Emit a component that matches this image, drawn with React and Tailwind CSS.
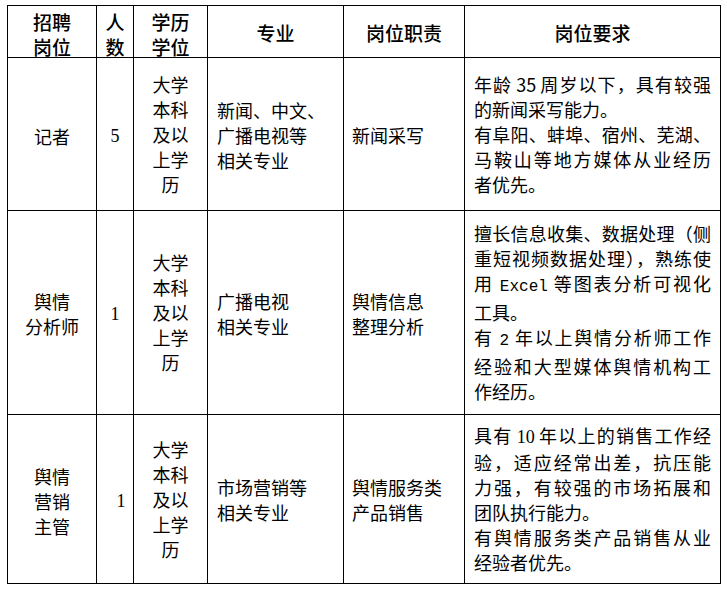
import React from "react";

const CJK = "font-['Noto_Sans_CJK_SC','Noto_Sans',sans-serif]";

function Cell({ children, className = "" }) {
  return (
    <div className={`border-r border-b border-black flex flex-col justify-center ${className}`}>
      {children}
    </div>
  );
}

function J({ children, className = "" }) {
  return (
    <div className={`whitespace-nowrap text-justify [text-align-last:justify] ${className}`}>{children}</div>
  );
}

function L({ children, className = "" }) {
  return <div className={`whitespace-nowrap text-left ${className}`}>{children}</div>;
}

const Serif = ({ children }) => (
  <span className="font-['Liberation_Serif',serif]">{children}</span>
);
const Mono = ({ children }) => (
  <span className="font-['Liberation_Mono',monospace] text-[16px]">{children}</span>
);

const Degree = () => (
  <Cell className="items-center text-center">
    <div>大学</div>
    <div>本科</div>
    <div>及以</div>
    <div>上学</div>
    <div>历</div>
  </Cell>
);

export default function App() {
  return (
    <div className={`w-[727px] h-[591px] bg-white text-black pt-[5px] pl-[7px] ${CJK} text-[18px] leading-[25px]`}>
      <div className="grid grid-cols-[89px_37px_74px_136px_121px_256px] grid-rows-[52px_153px_204px_169px] border-l border-t border-black w-fit">
        {/* header */}
        <Cell className="items-center text-center text-[19px] font-medium pt-[4px]">
          <div>招聘</div>
          <div>岗位</div>
        </Cell>
        <Cell className="items-center text-center text-[19px] font-medium pt-[4px]">
          <div>人</div>
          <div>数</div>
        </Cell>
        <Cell className="items-center text-center text-[19px] font-medium pt-[4px]">
          <div>学历</div>
          <div>学位</div>
        </Cell>
        <Cell className="items-center text-center text-[19px] font-medium pt-[2px]">
          <div>专业</div>
        </Cell>
        <Cell className="items-center text-center text-[19px] font-medium pt-[2px]">
          <div>岗位职责</div>
        </Cell>
        <Cell className="items-center text-center text-[19px] font-medium pt-[2px]">
          <div>岗位要求</div>
        </Cell>

        {/* row 1 */}
        <Cell className="items-center text-center pt-[5px]">
          <div>记者</div>
        </Cell>
        <Cell className="items-center text-center pt-[5px]">
          <Serif>5</Serif>
        </Cell>
        <Degree />
        <Cell className="pl-[9px] pt-[2px]">
          <L>新闻、中文、</L>
          <L>广播电视等</L>
          <L>相关专业</L>
        </Cell>
        <Cell className="pl-[8px] pt-[2px]">
          <L>新闻采写</L>
        </Cell>
        <Cell className="px-[9px]">
          <J className="[word-spacing:-1px]">年龄 35 周岁以下，具有较强</J>
          <L>的新闻采写能力。</L>
          <J>有阜阳、蚌埠、宿州、芜湖、</J>
          <J>马鞍山等地方媒体从业经历</J>
          <L>者优先。</L>
        </Cell>

        {/* row 2 */}
        <Cell className="items-center text-center pt-[3px]">
          <div>舆情</div>
          <div>分析师</div>
        </Cell>
        <Cell className="items-center text-center pt-[3px]">
          <Serif>1</Serif>
        </Cell>
        <Degree />
        <Cell className="pl-[9px] pt-[2px]">
          <L>广播电视</L>
          <L>相关专业</L>
        </Cell>
        <Cell className="pl-[8px] pt-[2px]">
          <L>舆情信息</L>
          <L>整理分析</L>
        </Cell>
        <Cell className="px-[9px]">
          <J>擅长信息收集、数据处理（侧</J>
          <J>重短视频数据处理），熟练使</J>
          <J>
            用 <Mono>Excel</Mono> 等图表分析可视化
          </J>
          <L>工具。</L>
          <J>
            有 <Mono>2</Mono> 年以上舆情分析师工作
          </J>
          <J>经验和大型媒体舆情机构工</J>
          <L>作经历。</L>
        </Cell>

        {/* row 3 */}
        <Cell className="items-center text-center pt-[5px]">
          <div>舆情</div>
          <div>营销</div>
          <div>主管</div>
        </Cell>
        <Cell className="items-center text-center pt-[5px] pl-[12px]">
          <Serif>1</Serif>
        </Cell>
        <Degree />
        <Cell className="pl-[9px] pt-[2px]">
          <L>市场营销等</L>
          <L>相关专业</L>
        </Cell>
        <Cell className="pl-[8px] pt-[2px]">
          <L>舆情服务类</L>
          <L>产品销售</L>
        </Cell>
        <Cell className="px-[9px]">
          <J className="[word-spacing:-1px]">
            具有 <Serif>10</Serif> 年以上的销售工作经
          </J>
          <J>验，适应经常出差，抗压能</J>
          <J>力强，有较强的市场拓展和</J>
          <L>团队执行能力。</L>
          <J>有舆情服务类产品销售从业</J>
          <L>经验者优先。</L>
        </Cell>
      </div>
    </div>
  );
}
